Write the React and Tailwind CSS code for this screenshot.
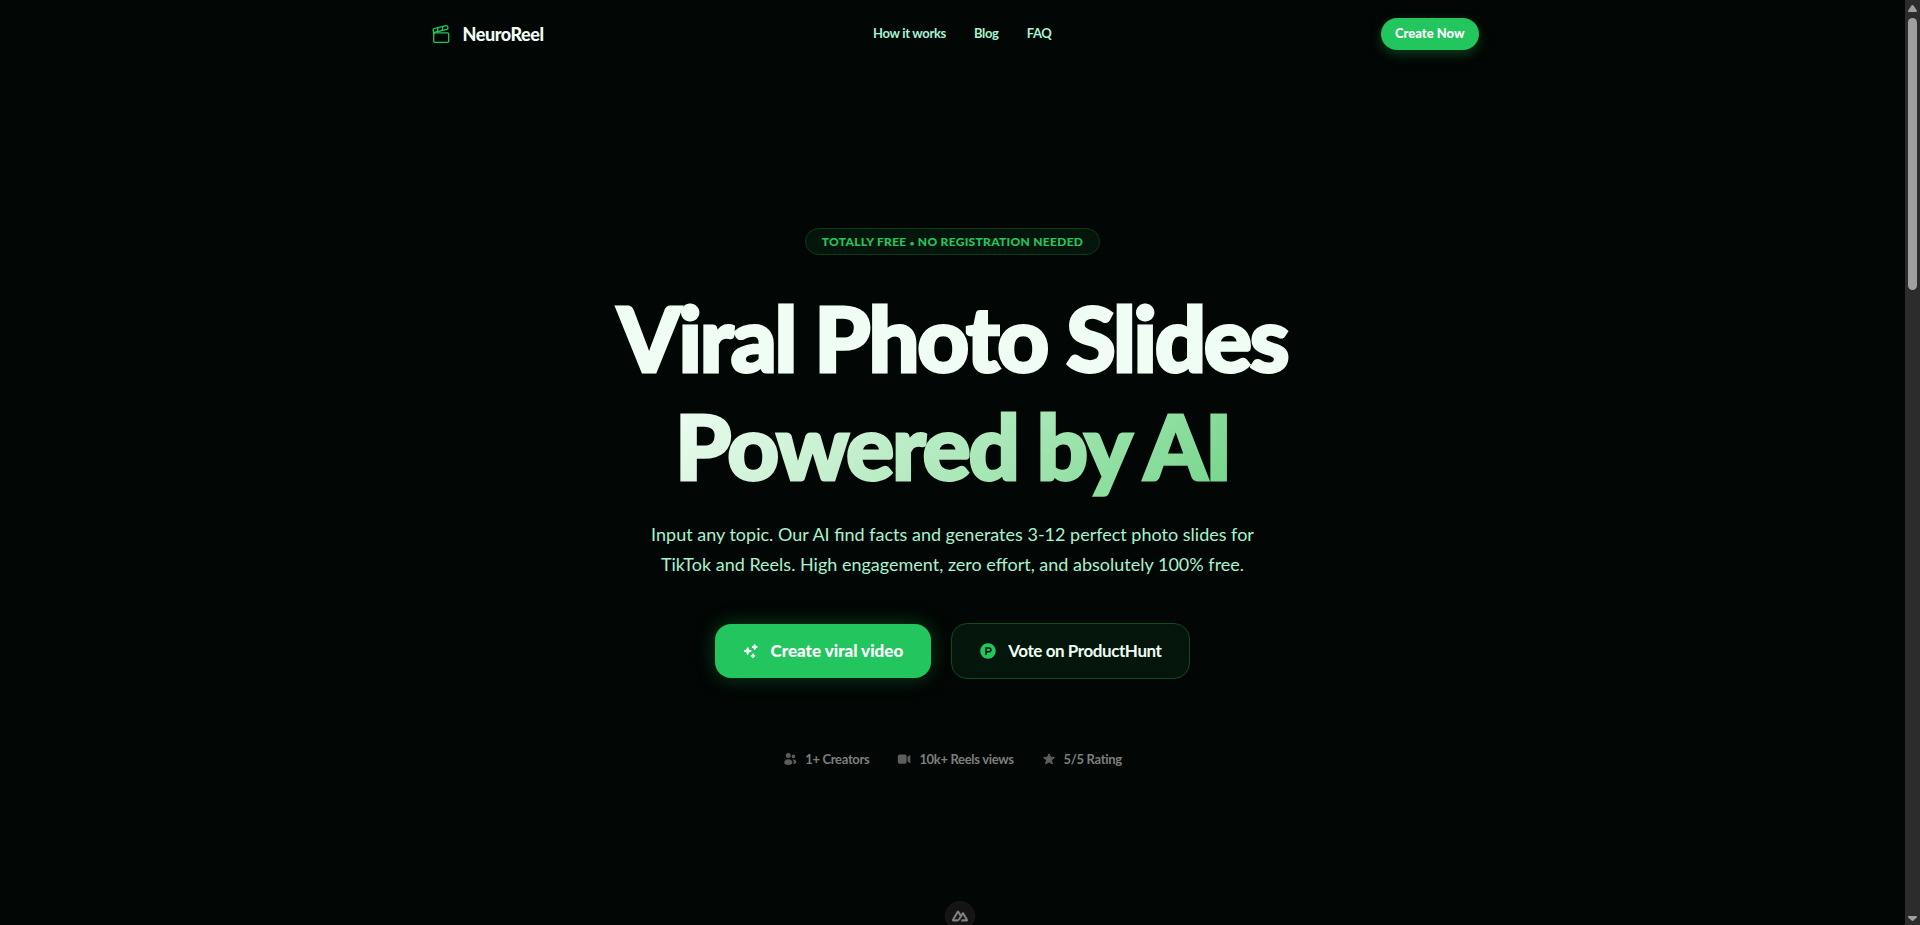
import { FaProductHunt } from "react-icons/fa";

function LogoIcon() {
  return (
    <svg viewBox="0 0 20 20" className="size-5" fill="none" stroke="#22c55e" strokeWidth="1.3" strokeLinejoin="round" aria-hidden="true">
      <rect x="2.7" y="8.9" width="15" height="9.4" rx="1.4" />
      <g transform="rotate(-14 2.4 6.6)">
        <rect x="2.2" y="4.9" width="15" height="3.7" rx="1.4" />
        <path d="M7.6 4.9 6 8.6M12.6 4.9 11 8.6" />
      </g>
      <path d="M2.7 8v3" />
    </svg>
  );
}

function SparklesIcon() {
  return (
    <svg viewBox="0 0 48 48" className="size-4" fill="currentColor" stroke="currentColor" strokeWidth="3" strokeLinejoin="round" aria-hidden="true">
      <path d="M14 13 17 21 25 24 17 27 14 35 11 27 3 24 11 21Z" />
      <path d="M35 4 37.5 9.5 43 12 37.5 14.5 35 20 32.5 14.5 27 12 32.5 9.5Z" />
      <path d="M30 32 32 36.5 36.5 38.5 32 40.5 30 45 28 40.5 23.5 38.5 28 36.5Z" />
    </svg>
  );
}

function PeopleIcon() {
  return (
    <svg viewBox="0 0 14 14" className="size-3.5" fill="currentColor" aria-hidden="true">
      <circle cx="5.3" cy="3.6" r="2.5" />
      <path d="M1.2 10.6C1.2 8.5 2.9 7.2 5.3 7.2S9.4 8.5 9.4 10.6C9.4 12.3 7.8 13 5.3 13S1.2 12.3 1.2 10.6Z" />
      <circle cx="10.4" cy="4.4" r="1.8" />
      <path d="M9.6 7.5C11.8 7.2 13.3 8.4 13.3 10 13.3 11.3 12.2 12 10.4 12 10.9 10.4 10.7 8.7 9.6 7.5Z" />
    </svg>
  );
}

function VideoIcon() {
  return (
    <svg viewBox="0 0 14 14" className="size-3.5" fill="currentColor" aria-hidden="true">
      <rect x="0.8" y="2.4" width="8.8" height="9.4" rx="1.8" />
      <path d="M10.5 5.3 12.2 3.5C12.7 3 13.3 3.3 13.3 3.9V10.3C13.3 10.9 12.7 11.2 12.2 10.7L10.5 8.9Z" />
    </svg>
  );
}

function StarIcon() {
  return (
    <svg viewBox="0 0 14 14" className="size-3.5" fill="currentColor" stroke="currentColor" strokeWidth="1" strokeLinejoin="round" aria-hidden="true">
      <path d="M7 1.7 8.5 5.2 12.4 5.5 9.5 8 10.4 11.9 7 9.9 3.6 11.9 4.5 8 1.6 5.5 5.5 5.2Z" />
    </svg>
  );
}

function NuxtIcon() {
  return (
    <svg viewBox="0 0 24 24" className="size-4" fill="currentColor" stroke="currentColor" strokeWidth="0.6" aria-hidden="true">
      <path d="M13.464 19.83h8.922c.283 0 .562-.073.807-.21a1.59 1.59 0 0 0 .591-.574 1.53 1.53 0 0 0 .216-.783 1.529 1.529 0 0 0-.217-.782L17.792 7.414a1.59 1.59 0 0 0-.591-.573 1.65 1.65 0 0 0-.807-.21c-.283 0-.562.073-.807.21a1.59 1.59 0 0 0-.59.573L13.463 9.99 10.47 4.953a1.591 1.591 0 0 0-.591-.573 1.653 1.653 0 0 0-.807-.21c-.284 0-.562.073-.807.21a1.591 1.591 0 0 0-.592.573L.216 17.481a1.53 1.53 0 0 0-.217.782c0 .275.074.545.216.783a1.59 1.59 0 0 0 .59.574c.246.137.525.21.808.21h5.6c2.22 0 3.856-.946 4.982-2.79l2.733-4.593 1.464-2.457 4.395 7.382h-5.859Zm-6.341-2.46-3.908-.002 5.858-9.842 2.923 4.921-1.957 3.29c-.748 1.196-1.597 1.632-2.916 1.632z" />
    </svg>
  );
}

const links = ["How it works", "Blog", "FAQ"];

const stats = [
  { label: "1+ Creators", Icon: PeopleIcon },
  { label: "10k+ Reels views", Icon: VideoIcon },
  { label: "5/5 Rating", Icon: StarIcon },
];

function Header() {
  return (
    <header className="mx-auto flex h-17 w-full max-w-[1100px] items-center justify-between px-6">
      <a href="#" className="flex items-center gap-3 pl-1 text-lg font-black tracking-tight text-[#f0fdf4]">
        <LogoIcon />
        NeuroReel
      </a>
      <nav className="flex items-center gap-7 text-[13px] font-bold tracking-tight text-[#a7f3d0]">
        {links.map((label) => (
          <a key={label} href="#">{label}</a>
        ))}
      </nav>
      <button type="button" className="h-8 rounded-full bg-[#22c55e] px-3.5 text-[13px] font-black text-white shadow-[0_4px_12px_rgba(34,197,94,0.3)]">
        Create Now
      </button>
    </header>
  );
}

function Hero() {
  return (
    <main className="flex flex-1 flex-col items-center px-6 pt-40 text-center">
      <p className="rounded-full border border-[#0b3a1c] bg-[#04160b] px-4 py-1 text-xs leading-[17px] font-black tracking-wide text-[#22c55e] uppercase">
        Totally free <span className="align-middle text-[8px] leading-none">•</span> No registration needed
      </p>
      <h1 className="mt-7 text-[90px] leading-[108px] font-black tracking-tight text-[#f0fdf4] [-webkit-text-stroke:3px_currentColor]">
        Viral Photo Slides
        <br />
        <span className="inline-block bg-linear-[135deg,#f0fdf4,#74d68a] bg-clip-text text-transparent">Powered by AI</span>
      </h1>
      <p className="mt-5 max-w-[640px] text-[18px] leading-[30px] text-[#a7f3d0]">
        Input any topic. Our AI find facts and generates 3-12 perfect photo slides for TikTok and Reels. High engagement, zero effort, and absolutely 100% free.
      </p>
      <div className="mt-11 flex items-center gap-5">
        <button type="button" className="flex h-[54px] items-center gap-3 rounded-2xl bg-[#22c55e] px-7 text-[17px] font-black text-white shadow-[0_0_20px_rgba(34,197,94,0.3)]">
          <SparklesIcon />
          Create viral video
        </button>
        <a href="#" className="flex h-14 items-center gap-3 rounded-2xl border border-[#0c4a22] bg-[#04160b] px-7 text-[17px] font-bold tracking-tight text-[#f0fdf4]">
          <FaProductHunt className="size-4 text-[#22c55e]" aria-hidden="true" />
          Vote on ProductHunt
        </a>
      </div>
      <ul className="mt-[70px] flex items-center gap-7 text-[13px] leading-5 font-bold tracking-tight text-[#7c7e7d]">
        {stats.map(({ label, Icon }) => (
          <li key={label} className="flex items-center gap-2">
            <span className="text-[#5c5e5d]"><Icon /></span>
            {label}
          </li>
        ))}
      </ul>
    </main>
  );
}

function Scrollbar() {
  return (
    <div className="flex w-[15px] shrink-0 flex-col items-center bg-[#2c2c2c] text-[#9f9f9f]" aria-hidden="true">
      <svg viewBox="0 0 15 18" className="h-[18px] w-[15px]" fill="currentColor">
        <path d="M7.5 5C8 5 8.4 5.3 8.7 5.8L11.8 10.5C12.2 11.3 11.9 12 11 12H4C3.1 12 2.8 11.3 3.2 10.5L6.3 5.8C6.6 5.3 7 5 7.5 5Z" />
      </svg>
      <div className="h-[272px] w-[9px] rounded-full bg-[#9f9f9f]" />
      <svg viewBox="0 0 15 18" className="mt-auto h-[18px] w-[15px]" fill="currentColor">
        <path d="M7.5 14C8 14 8.4 13.7 8.7 13.2L11.8 10.5C12.2 9.7 11.9 9 11 9H4C3.1 9 2.8 9.7 3.2 10.5L6.3 13.2C6.6 13.7 7 14 7.5 14Z" />
      </svg>
    </div>
  );
}

export default function App() {
  return (
    <div className="flex h-screen overflow-hidden bg-[#020604] font-['Lato',sans-serif]">
      <div className="flex min-w-0 flex-1 flex-col">
        <Header />
        <Hero />
      </div>
      <Scrollbar />
      <button type="button" aria-label="Toggle devtools" className="fixed -bottom-1.5 left-1/2 flex h-[30px] w-[30px] -translate-x-1/2 items-center justify-center rounded-full border border-[#1c1c1c] bg-[#141414] text-[#858585]">
        <NuxtIcon />
      </button>
    </div>
  );
}
